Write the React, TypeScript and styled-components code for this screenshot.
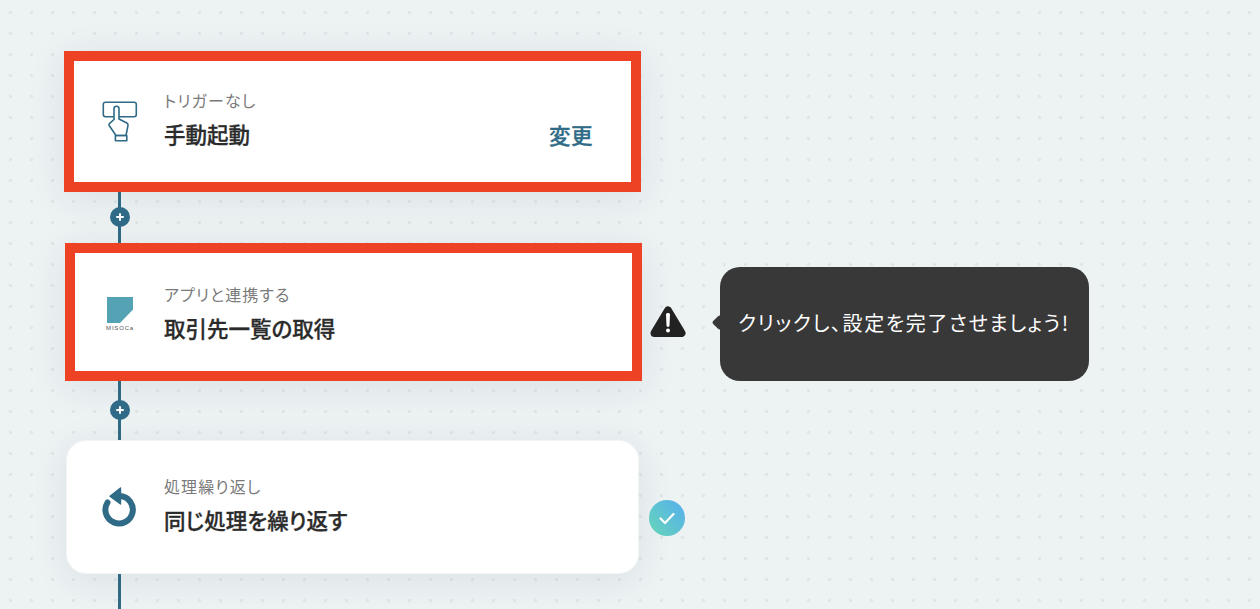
import styled, { createGlobalStyle } from "styled-components"

const GlobalStyle = createGlobalStyle`
    html, body {
        margin: 0;
        height: 100%;
        overflow: hidden;
    }
    body {
        font-family: "Noto Sans CJK JP", "Noto Sans", sans-serif;
        font-feature-settings: "palt";
        color: #2b2b2b;
    }
`

const HandIcon = () => (
    <svg width="36" height="42" viewBox="0 0 36 42" fill="none" stroke="#2f6b86" strokeWidth="1.6" strokeLinejoin="round" strokeLinecap="round">
        <rect x="1.3" y="1.3" width="33" height="14.4" rx="2.2" />
        <path fill="#fff" d="M12 18.5V7.7a2.5 2.5 0 0 1 5 0V18l7.8 4c1 .5 1.4 1.3 1.2 2.4l-2 10.1H14L7.2 24.5c-.5-.7-.4-1.2.2-1.8L12 18.5z" />
        <rect x="13.4" y="34.5" width="11.4" height="5.2" />
    </svg>
)

const MisocaLogo = () => (
    <LogoWrap>
        <svg width="26" height="26" viewBox="0 0 26 26">
            <path fill="#53a3b5" d="M0 0H26V12.5L13 26H0z" />
        </svg>
        <LogoText>MISOCa</LogoText>
    </LogoWrap>
)

const RepeatIcon = () => (
    <svg width="36" height="42" viewBox="0 0 36 42" fill="none">
        <path d="M5.5 16.5a13.7 13.7 0 1 0 12.8-6.4" stroke="#2f6b86" strokeWidth="6" strokeLinecap="round" />
        <path d="M18.5 2v16L8 10.2z" fill="#2f6b86" stroke="#2f6b86" strokeWidth="1.4" strokeLinejoin="round" />
    </svg>
)

const WarningIcon = () => (
    <svg width="36" height="33" viewBox="0 0 36 33">
        <path d="M18 5.5L31.5 28H4.5z" fill="#222" stroke="#222" strokeWidth="8" strokeLinejoin="round" />
        <path d="M17.5 9.5l.5 11 .5-11z" stroke="#fff" strokeWidth="3" strokeLinejoin="round" fill="#fff" />
        <circle cx="18" cy="25.6" r="2" fill="#fff" />
    </svg>
)

const CheckIcon = () => (
    <svg width="16" height="13" viewBox="0 0 16 13" fill="none">
        <path d="M1.5 6.5L6 11 14.5 2" stroke="#fff" strokeWidth="2.2" strokeLinecap="round" strokeLinejoin="round" />
    </svg>
)

export default function App() {
    return (
        <Canvas>
            <GlobalStyle />
            <StepRow>
                <Card $left={64} $width={577} $height={141} $active>
                    <IconSlot><HandIcon /></IconSlot>
                    <CardText $shift={-3}>
                        <Caption>トリガーなし</Caption>
                        <Title>手動起動</Title>
                    </CardText>
                    <ChangeLink>変更</ChangeLink>
                </Card>
            </StepRow>
            <Connector $height={51}><AddButton /></Connector>
            <StepRow>
                <Card $left={65} $width={577} $height={138} $active>
                    <IconSlot><MisocaLogo /></IconSlot>
                    <CardText $shift={1}>
                        <Caption>アプリと連携する</Caption>
                        <Title>取引先一覧の取得</Title>
                    </CardText>
                </Card>
                <StatusSlot $left={8} $top={18}><WarningIcon /></StatusSlot>
                <Tooltip>クリックし、設定を完了させましょう!</Tooltip>
            </StepRow>
            <Connector $height={59}><AddButton /></Connector>
            <StepRow>
                <Card $left={66} $width={573} $height={134}>
                    <IconSlot><RepeatIcon /></IconSlot>
                    <CardText $shift={-2}>
                        <Caption>処理繰り返し</Caption>
                        <Title>同じ処理を繰り返す</Title>
                    </CardText>
                </Card>
                <StatusSlot $left={10} $top={22}><DoneBadge><CheckIcon /></DoneBadge></StatusSlot>
            </StepRow>
            <Connector $height={40} />
        </Canvas>
    )
}

const Canvas = styled.div`
    box-sizing: border-box;
    height: 100vh;
    padding-top: 51px;
    overflow: hidden;
    background-color: #edf2f3;
    background-image: radial-gradient(circle at center, #dfe5e7 1.3px, transparent 1.7px);
    background-size: 21px 21px;
    background-position: 0 2px;
`

const StepRow = styled.div`
    display: flex;
    align-items: center;
`

const Card = styled.div<{ $left: number, $width: number, $height: number, $active?: boolean }>`
    box-sizing: border-box;
    flex: none;
    display: flex;
    align-items: center;
    width: ${props => props.$width}px;
    height: ${props => props.$height}px;
    margin-left: ${props => props.$left}px;
    padding-left: ${props => 102 - props.$left - (props.$active ? 10 : 1)}px;
    padding-right: ${props => props.$left === 64 ? 38 : 0}px;
    background-color: #fff;
    border: ${props => props.$active ? "10px solid #ee4224" : "1px solid #f3f5f5"};
    border-radius: ${props => props.$active ? 0 : 20}px;
    box-shadow: 0 6px 36px rgba(45, 75, 85, 0.09);
`

const IconSlot = styled.div`
    flex: none;
    display: flex;
    justify-content: center;
    align-items: center;
    width: 36px;
    height: 50px;
    margin-right: 26px;
`

const LogoWrap = styled.div`
    display: flex;
    flex-direction: column;
    align-items: center;
    gap: 2px;
    margin-top: 4px;
`

const LogoText = styled.span`
    font-family: "Liberation Sans", sans-serif;
    font-size: 6px;
    line-height: 7px;
    letter-spacing: 0.8px;
    color: #555;
`

const CardText = styled.div<{ $shift: number }>`
    flex: 1;
    display: flex;
    flex-direction: column;
    gap: 10px;
    margin-top: ${props => props.$shift * 2}px;
`

const Caption = styled.div`
    font-size: 16px;
    line-height: 20px;
    letter-spacing: 1.1px;
    color: #7a7a7a;
`

const Title = styled.div`
    font-size: 21.5px;
    line-height: 28px;
    font-weight: 500;
    -webkit-text-stroke: 0.3px #2b2b2b;
    color: #2b2b2b;
`

const ChangeLink = styled.span`
    flex: none;
    margin-top: 26px;
    font-size: 21.5px;
    line-height: 28px;
    font-weight: 500;
    letter-spacing: 0.5px;
    -webkit-text-stroke: 0.3px #2f6b86;
    color: #2f6b86;
`

const Connector = styled.div<{ $height: number }>`
    box-sizing: border-box;
    display: flex;
    justify-content: center;
    align-items: center;
    width: 3px;
    height: ${props => props.$height}px;
    margin-left: 118px;
    padding-bottom: 2px;
    background-color: #2f6b86;
`

const AddButton = styled.div`
    position: relative;
    flex: none;
    width: 20px;
    height: 20px;
    border-radius: 50%;
    background-color: #2f6b86;

    &::before, &::after {
        content: "";
        position: absolute;
        left: 50%;
        top: 50%;
        background-color: #fff;
        border-radius: 1px;
        transform: translate(-50%, -50%);
    }
    &::before {
        width: 8px;
        height: 2px;
    }
    &::after {
        width: 2px;
        height: 8px;
    }
`

const StatusSlot = styled.div<{ $left: number, $top: number }>`
    flex: none;
    display: flex;
    margin-left: ${props => props.$left}px;
    margin-top: ${props => props.$top}px;
`

const DoneBadge = styled.div`
    display: flex;
    justify-content: center;
    align-items: center;
    width: 36px;
    height: 36px;
    border-radius: 50%;
    background: linear-gradient(50deg, #66d6b6, #57aef0);
`

const Tooltip = styled.div`
    position: relative;
    box-sizing: border-box;
    display: flex;
    align-items: center;
    align-self: flex-end;
    width: 369px;
    height: 114px;
    margin-left: 34px;
    padding: 0 0 3px 18px;
    border-radius: 20px;
    background-color: #383838;
    color: #fff;
    font-size: 20px;
    letter-spacing: 1.6px;
    white-space: nowrap;

    &::before {
        content: "";
        position: absolute;
        left: -6px;
        top: 50px;
        width: 11px;
        height: 11px;
        background-color: #383838;
        border-radius: 2px;
        transform: rotate(45deg);
    }
`
